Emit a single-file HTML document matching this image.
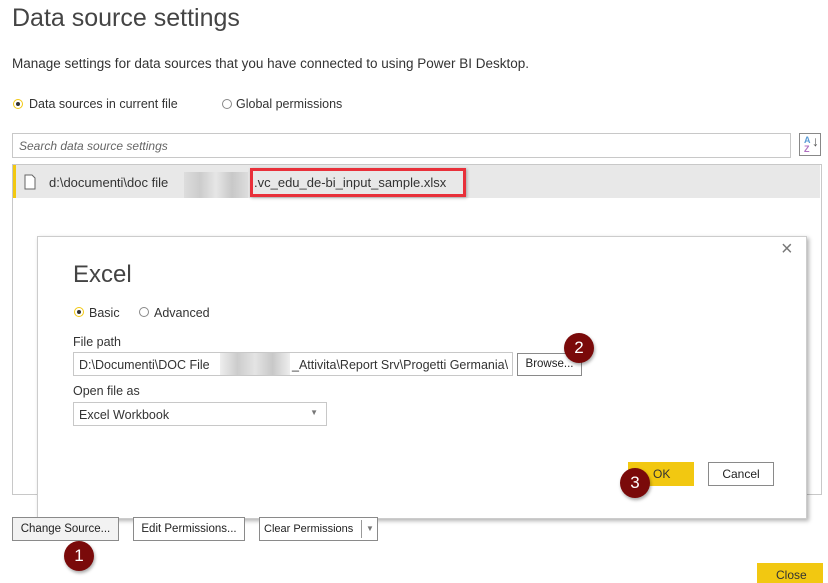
<!DOCTYPE html>
<html><head><style>
body{margin:0;width:828px;height:575px;background:#fff;font-family:"Liberation Sans",sans-serif;color:#333;position:relative;overflow:hidden}
.a{position:absolute;white-space:nowrap}
.rad{position:absolute;width:8px;height:8px;border-radius:50%;border:1.5px solid #888;background:#fff}
.rad.on{border-color:#f2c811}
.rad.on:after{content:"";position:absolute;left:2px;top:2px;width:4px;height:4px;border-radius:50%;background:#333}
.btn{position:absolute;border:1px solid #8a8a8a;background:#fff;font-size:12px;text-align:center;box-sizing:border-box;color:#222}
.circ{position:absolute;width:30px;height:30px;border-radius:50%;background:#7a0a0a;color:#fff;font-size:17px;text-align:center;line-height:30px;box-shadow:1px 2px 3px rgba(0,0,0,.35)}
</style></head><body>
<div class="a" style="left:12px;top:4px;font-size:25px;color:#444;font-weight:300">Data source settings</div>
<div class="a" style="left:12px;top:56px;font-size:13.5px">Manage settings for data sources that you have connected to using Power BI Desktop.</div>
<div class="rad on" style="left:13px;top:99px"></div>
<div class="a" style="left:29px;top:97px;font-size:12.5px">Data sources in current file</div>
<div class="rad" style="left:222px;top:99px"></div>
<div class="a" style="left:236px;top:97px;font-size:12.5px">Global permissions</div>
<div class="a" style="left:12px;top:133px;width:777px;height:23px;border:1px solid #c8c8c8"></div>
<div class="a" style="left:19px;top:139px;font-size:12px;font-style:italic;color:#666">Search data source settings</div>
<div class="a" style="left:799px;top:133px;width:22px;height:23px;border:1px solid #888;box-sizing:border-box;font-size:9px;line-height:9px;font-weight:bold"><span style="position:absolute;left:4px;top:2px;color:#5b9bd5">A</span><span style="position:absolute;left:4px;top:11px;color:#b070c0">Z</span><span style="position:absolute;left:12px;top:3px;color:#555;font-size:14px;font-weight:normal">↓</span></div>
<div class="a" style="left:12px;top:164px;width:808px;height:329px;border:1px solid #c8c8c8"></div>
<div class="a" style="left:13px;top:165px;width:807px;height:33px;background:#e8e8e8;border-left:3px solid #f2c811;box-sizing:border-box"></div>
<svg class="a" style="left:24px;top:174px" width="12" height="16"><path d="M1 1H8L11 4V15H1Z" fill="#fff" stroke="#666"/></svg>
<div class="a" style="left:49px;top:175px;font-size:13px;color:#333">d:\documenti\doc file</div>
<div class="a" style="left:184px;top:172px;width:64px;height:26px;background:linear-gradient(90deg,#ddd,#ccc,#e6e6e6,#c8c8c8,#ddd)"></div>
<div class="a" style="left:250px;top:168px;width:216px;height:29px;border:3px solid #e8303a;box-sizing:border-box;box-shadow:1px 1px 3px rgba(0,0,0,.3)"></div>
<div class="a" style="left:254px;top:175px;font-size:13px;color:#333">.vc_edu_de-bi_input_sample.xlsx</div>

<div class="a" style="left:37px;top:236px;width:770px;height:283px;background:#fff;border:1px solid #ccc;box-sizing:border-box;box-shadow:2px 2px 4px rgba(0,0,0,.3)"></div>
<div class="a" style="left:781px;top:238px;font-size:20px;color:#777">×</div>
<div class="a" style="left:73px;top:261px;font-size:24px;font-weight:300;color:#444">Excel</div>
<div class="rad on" style="left:74px;top:307px"></div>
<div class="a" style="left:89px;top:306px;font-size:12.5px">Basic</div>
<div class="rad" style="left:139px;top:307px"></div>
<div class="a" style="left:154px;top:306px;font-size:12.5px">Advanced</div>
<div class="a" style="left:73px;top:335px;font-size:12.5px">File path</div>
<div class="a" style="left:73px;top:352px;width:440px;height:24px;border:1px solid #c8c8c8;box-sizing:border-box;overflow:hidden"><span style="position:absolute;left:5px;top:5px;font-size:12.5px">D:\Documenti\DOC File</span><span style="position:absolute;left:146px;top:0;width:70px;height:24px;background:linear-gradient(90deg,#eee,#ccc,#e4e4e4,#c8c8c8,#eee)"></span><span style="position:absolute;left:218px;top:5px;font-size:12.5px">_Attivita\Report Srv\Progetti Germania\</span></div>
<div class="btn" style="left:517px;top:353px;width:65px;height:23px;line-height:21px;font-size:11.5px">Browse...</div>
<div class="circ" style="left:564px;top:333px">2</div>
<div class="a" style="left:73px;top:384px;font-size:12.5px">Open file as</div>
<div class="a" style="left:73px;top:402px;width:254px;height:24px;border:1px solid #c8c8c8;box-sizing:border-box"><span style="position:absolute;left:5px;top:5px;font-size:12.5px">Excel Workbook</span><span style="position:absolute;right:8px;top:5px;font-size:8px;color:#777">▼</span></div>
<div class="a" style="left:628px;top:462px;width:66px;height:24px;background:#f2c811"></div>
<div class="a" style="left:653px;top:467px;font-size:12px">OK</div>
<div class="btn" style="left:708px;top:462px;width:66px;height:24px;line-height:22px">Cancel</div>
<div class="circ" style="left:620px;top:468px">3</div>

<div class="btn" style="left:12px;top:517px;width:107px;height:24px;line-height:22px;background:#f2f2f2;font-size:11.5px">Change Source...</div>
<div class="btn" style="left:133px;top:517px;width:112px;height:24px;line-height:22px;font-size:11.5px">Edit Permissions...</div>
<div class="btn" style="left:259px;top:517px;width:119px;height:24px;line-height:22px;text-align:left;padding-left:4px;font-size:11px">Clear Permissions<span style="position:absolute;left:101px;top:2px;height:18px;border-left:1px solid #999"></span><span style="position:absolute;left:106px;top:0;font-size:8px;color:#777">▼</span></div>
<div class="circ" style="left:64px;top:541px">1</div>
<div class="a" style="left:757px;top:563px;width:66px;height:20px;background:#f2c811"></div>
<div class="a" style="left:776px;top:568px;font-size:12px">Close</div>
</body></html>
